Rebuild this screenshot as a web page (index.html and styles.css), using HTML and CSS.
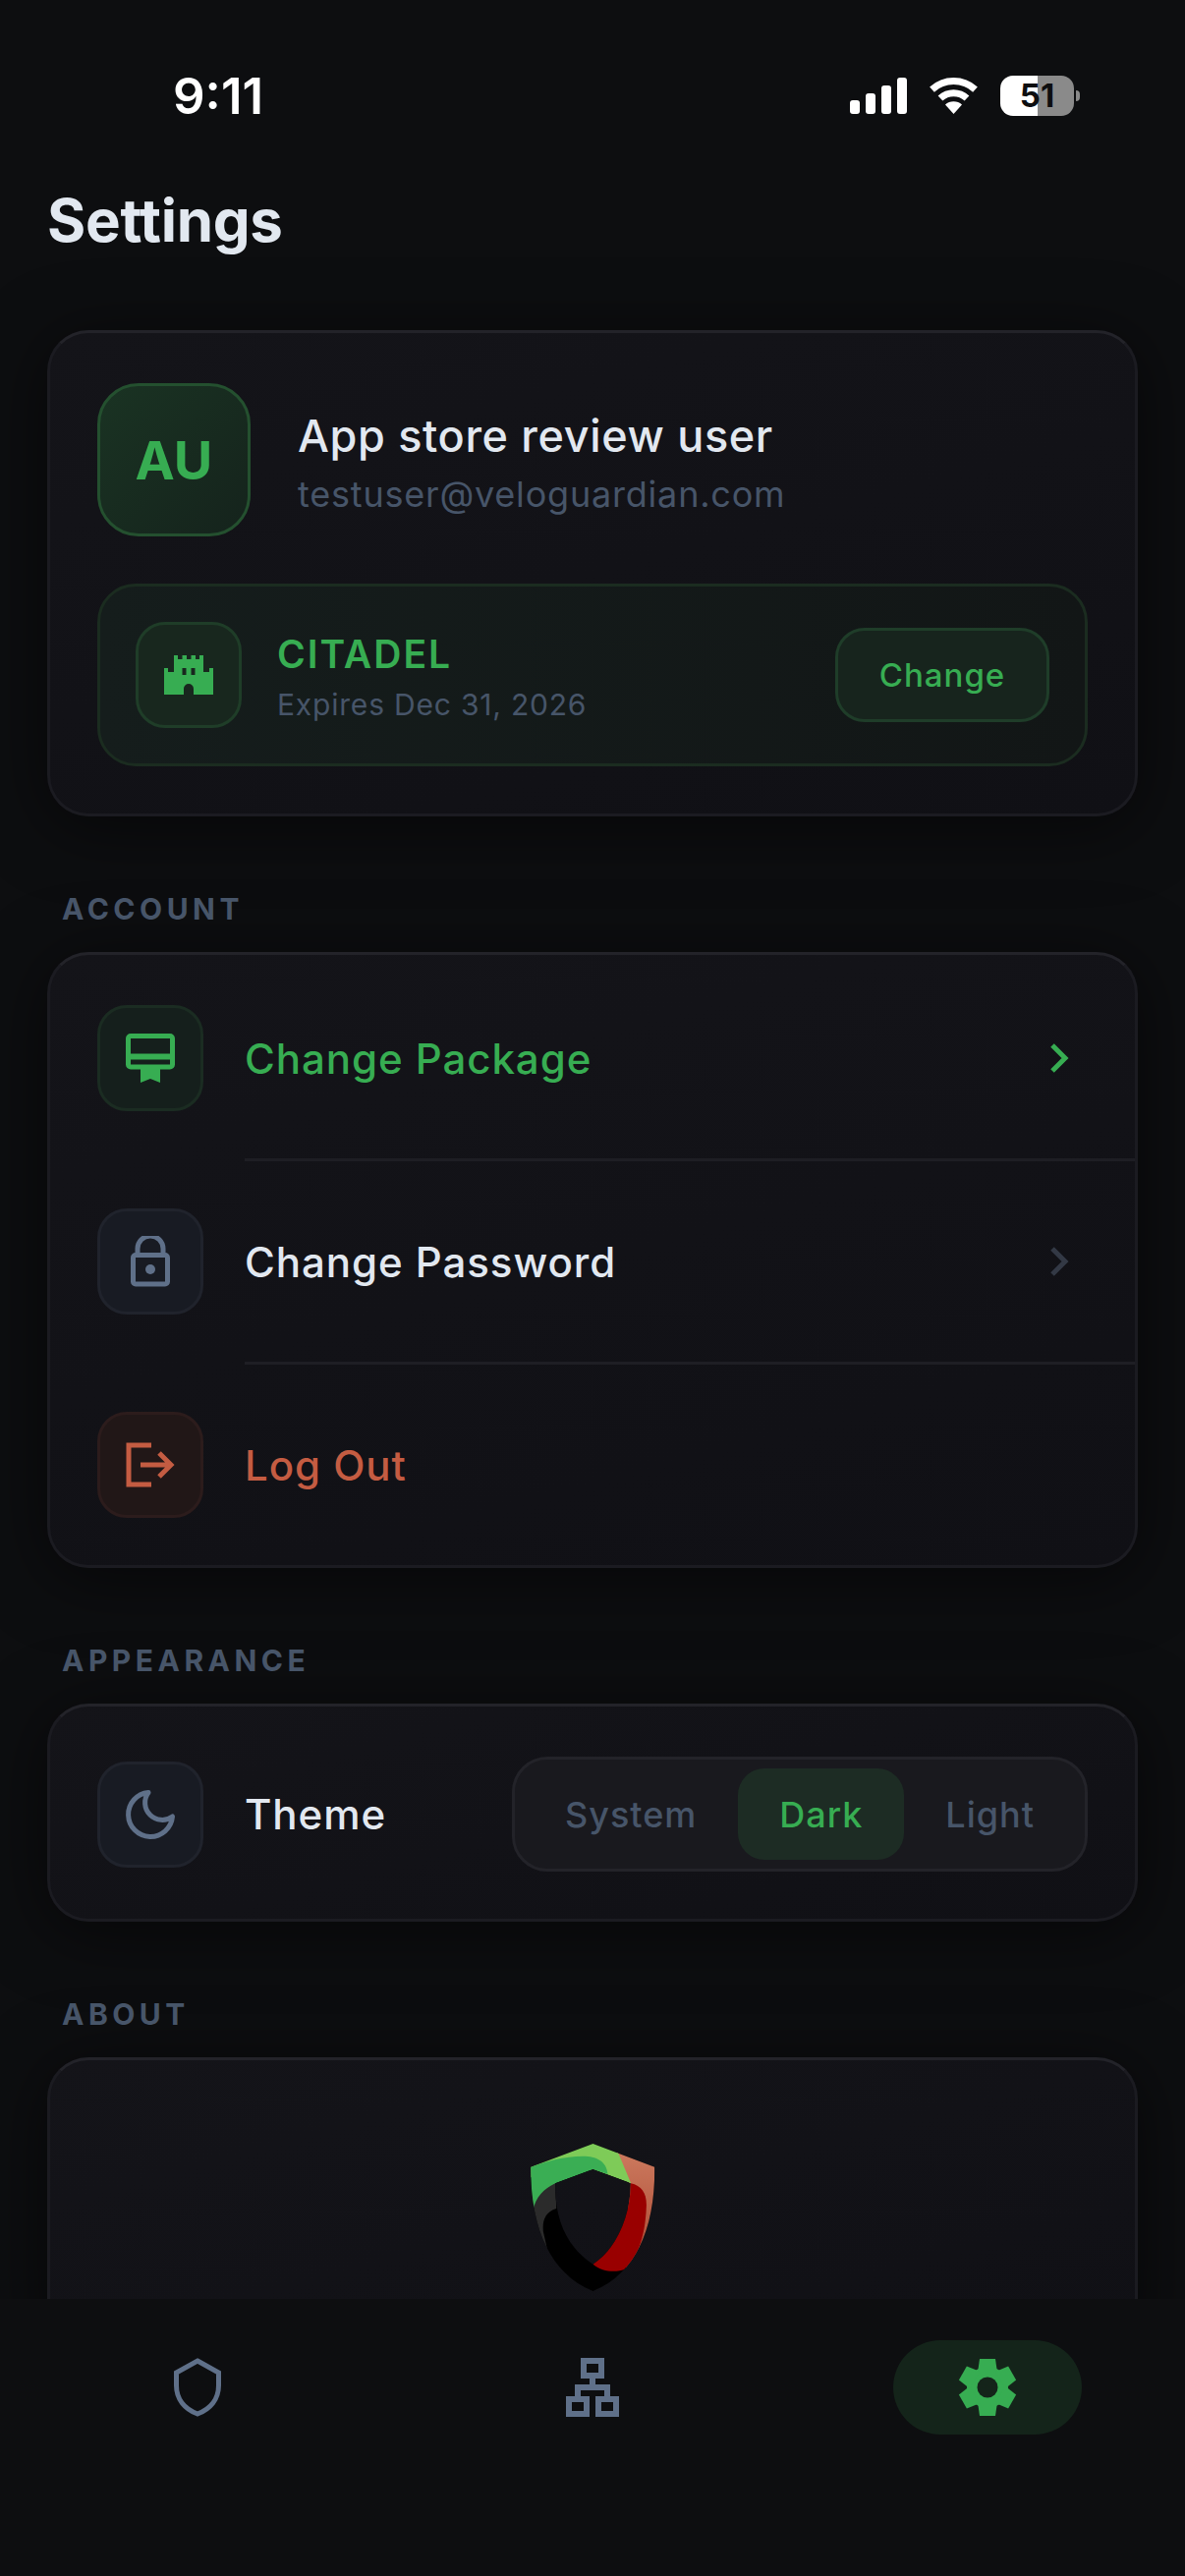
FILE: index.html
```html
<!DOCTYPE html>
<html lang="en">
<head>
<meta charset="utf-8">
<title>Settings</title>
<link rel="stylesheet" href="styles.css">
</head>
<body>
<div class="app">
  <main class="screen">
    <header class="status">
      <span class="time">9:11</span>
      <div class="status-icons">
        <div class="signal"><i class="b1"></i><i class="b2"></i><i class="b3"></i><i class="b4"></i></div>
        <svg class="wifi" viewBox="0 0 51 37"><path d="M3.5 12.1A32.5 32.5 0 0 1 47.5 12.1M12 21A20 20 0 0 1 39 21" fill="none" stroke="#fff" stroke-width="7"/><path d="M25.5 37L17 27.5A13 13 0 0 1 34 27.5Z" fill="#fff"/></svg>
        <div class="battery-wrap"><div class="battery">51</div><div class="nib"></div></div>
      </div>
    </header>
    <h1 class="title">Settings</h1>

    <section class="card profile">
      <div class="user">
        <div class="avatar">AU</div>
        <div class="user-text">
          <div class="name">App store review user</div>
          <div class="email">testuser@veloguardian.com</div>
        </div>
      </div>
      <div class="plan">
        <div class="plan-icon">
          <svg width="50" height="40" viewBox="0 0 50 40"><path fill-rule="evenodd" fill="#37ad52" d="M10 0h4v4h4.5V0H23v4h4.5V0H32v4h4V0h4v17h6v-4h4v27H30v-6a5 5 0 0 0-10 0v6H0V13h4v4h6ZM18.5 13v7h4v-7ZM27.5 13v7h4v-7Z"/></svg>
        </div>
        <div class="plan-text">
          <div class="plan-name">CITADEL</div>
          <div class="plan-exp">Expires Dec 31, 2026</div>
        </div>
        <div class="change-btn">Change</div>
      </div>
    </section>

    <div class="label">ACCOUNT</div>
    <section class="card list">
      <div class="row">
        <div class="icon-box box-green">
          <svg width="50" height="50" viewBox="0 0 50 50"><rect x="2.500" y="2.500" width="45" height="31.500" rx="2.500" fill="none" stroke="#37ad52" stroke-width="5"/><path d="M3 20.500h44v6H3Z" fill="#37ad52"/><path d="M15 36h20v14l-10-4-10 4Z" fill="#37ad52"/></svg>
        </div>
        <span class="row-text green">Change Package</span>
        <svg class="chev" width="20" height="32" viewBox="0 0 20 32"><path d="M3 3l13 13L3 29" fill="none" stroke="#37ad52" stroke-width="5"/></svg>
      </div>
      <div class="divider"></div>
      <div class="row">
        <div class="icon-box box-slate">
          <svg width="40" height="52" viewBox="0 0 40 52"><path d="M7 20v-7a13 13 0 0 1 26 0v7" fill="none" stroke="#5f7089" stroke-width="5"/><rect x="2.500" y="19.500" width="35" height="29.500" rx="2.500" fill="none" stroke="#5f7089" stroke-width="5"/><circle cx="20" cy="34" r="5" fill="#5f7089"/></svg>
        </div>
        <span class="row-text">Change Password</span>
        <svg class="chev" width="20" height="32" viewBox="0 0 20 32"><path d="M3 3l13 13L3 29" fill="none" stroke="#333945" stroke-width="5"/></svg>
      </div>
      <div class="divider"></div>
      <div class="row">
        <div class="icon-box box-red">
          <svg width="50" height="46" viewBox="0 0 50 46"><path d="M26 3H3v40h23" fill="none" stroke="#c45c42" stroke-width="5"/><path d="M15 23h31M34 11l12 12-12 12" fill="none" stroke="#c45c42" stroke-width="5"/></svg>
        </div>
        <span class="row-text red">Log Out</span>
      </div>
    </section>

    <div class="label">APPEARANCE</div>
    <section class="card theme">
      <div class="icon-box box-slate">
        <svg width="60" height="60" viewBox="0 0 24 24"><path d="M21 12.790A9 9 0 1 1 11.210 3 7 7 0 0 0 21 12.790Z" fill="none" stroke="#5f7089" stroke-width="2" stroke-linejoin="round"/></svg>
      </div>
      <span class="row-text">Theme</span>
      <div class="segment">
        <span class="seg">System</span>
        <span class="seg seg-on">Dark</span>
        <span class="seg">Light</span>
      </div>
    </section>

    <div class="label">ABOUT</div>
    <section class="card about">
      <svg width="127" height="150" viewBox="180 97 380 450">
        <defs>
          <clipPath id="ring"><path clip-rule="evenodd" d="M370 97L558 168C560 340 510 490 370 547C230 490 180 340 180 168ZM370 175L255 218C252 340 300 420 370 465C440 420 485 320 485 218Z"/></clipPath>
          <linearGradient id="salmon" x1="0" y1="0" x2="0" y2="1"><stop offset="0" stop-color="#cc7a5e"/><stop offset="1" stop-color="#a8432f"/></linearGradient>
        </defs>
        <g clip-path="url(#ring)">
          <rect x="170" y="90" width="400" height="470" fill="#000"/>
          <path d="M440 120L570 160V400L470 490L480 218Z" fill="url(#salmon)"/>
          <path d="M485 218C520 225 535 250 533 290C530 370 510 440 470 480C440 490 400 490 370 465Z" fill="#990000"/>
          <path d="M255 210L258 295C225 305 215 330 218 365L235 440L170 340V230Z" fill="#2b2b2b"/>
          <path d="M170 160L370 90L445 120L486 218L370 175L300 190L180 200Z" fill="#7ecb58"/>
          <path d="M170 168V310L187 300C195 260 220 235 255 218L370 175L415 190C412 150 380 135 340 135C280 135 230 150 180 168Z" fill="#3aae54"/>
        </g>
      </svg>
    </section>
  </main>

  <nav class="tabs">
    <div class="tab">
      <svg width="48" height="60" viewBox="0 0 48 60"><path d="M24 3L45.500 15V28C45.500 42 37 52 24 57C11 52 2.500 42 2.500 28V15Z" fill="none" stroke="#5f7089" stroke-width="5"/></svg>
    </div>
    <div class="tab">
      <svg width="54" height="60" viewBox="0 0 54 60"><g fill="none" stroke="#5f7089" stroke-width="6"><rect x="18" y="3" width="18" height="15"/><rect x="3" y="42" width="18" height="15"/><rect x="33" y="42" width="18" height="15"/><path d="M27 21v9M12 39v-9h30v9"/></g></svg>
    </div>
    <div class="tab">
      <div class="tab-on">
        <svg width="60" height="60" viewBox="-30 -30 60 60">
          <g fill="#37ad52">
            <circle r="21"/>
            <path d="M-8-29H8L10-15H-10Z"/>
            <path d="M-8-29H8L10-15H-10Z" transform="rotate(60)"/>
            <path d="M-8-29H8L10-15H-10Z" transform="rotate(120)"/>
            <path d="M-8-29H8L10-15H-10Z" transform="rotate(180)"/>
            <path d="M-8-29H8L10-15H-10Z" transform="rotate(240)"/>
            <path d="M-8-29H8L10-15H-10Z" transform="rotate(300)"/>
          </g>
          <circle r="10.500" fill="#14241a"/>
        </svg>
      </div>
    </div>
  </nav>
</div>
</body>
</html>
```
FILE: styles.css
```css
* { box-sizing: border-box; }
html, body { margin: 0; padding: 0; background: #0d0e10; }
body { font-family: Inter, "Liberation Sans", sans-serif; color: #e2e8f0; }
.app { width: 1206px; height: 2622px; display: flex; flex-direction: column; overflow: hidden; }
.screen { flex: 1; min-height: 0; overflow: hidden; padding: 0 48px; background: #0d0e10; }

.status { height: 188px; padding: 77px 107px 0 176px; margin: 0 -48px; display: flex; align-items: flex-start; }
.time { font-size: 51px; font-weight: 600; line-height: 41px; color: #fff; }
.status-icons { margin-left: auto; display: flex; gap: 22px; align-items: flex-start; }
.signal { display: flex; align-items: flex-end; gap: 6px; height: 37px; margin-top: 2px; }
.signal i { width: 10px; background: #fff; border-radius: 3px; display: block; }
.b1 { height: 14px; } .b2 { height: 21px; } .b3 { height: 29px; } .b4 { height: 37px; }
.wifi { width: 51px; height: 37px; margin-top: 2px; }
.battery-wrap { display: flex; align-items: center; gap: 2px; }
.battery { width: 75px; height: 41px; border-radius: 13px; background: linear-gradient(90deg, #fff 51%, #8a8a8a 51%); color: #0d0e10; font-size: 33px; font-weight: 700; line-height: 41px; text-align: center; }
.nib { width: 4px; height: 11px; background: #8a8a8a; border-radius: 0 4px 4px 0; }

.title { margin: 0 0 76px; font-size: 60px; font-weight: 700; line-height: 72px; color: #e2e8f0; letter-spacing: -0.3px; }

.card { border: 3px solid #1b1b21; border-top-color: #232329; border-radius: 42px; background: linear-gradient(165deg, #141419, #101015); box-shadow: 0 10px 70px rgba(0, 0, 0, .55); }
.profile { padding: 51px 48px 48px; }
.user { display: flex; align-items: center; gap: 48px; }
.avatar { width: 156px; height: 156px; border-radius: 42px; border: 3px solid #24502f; background: linear-gradient(135deg, #1a3323, #15231c); color: #37ad52; font-size: 54px; font-weight: 700; display: flex; align-items: center; justify-content: center; }
.user-text { padding-top: 5px; }
.name { font-size: 45px; font-weight: 500; line-height: 60px; color: #e2e8f0; letter-spacing: 0.65px; }
.email { margin-top: 5px; font-size: 36px; font-weight: 400; line-height: 48px; color: #475569; letter-spacing: 0.8px; }

.plan { margin-top: 48px; padding: 36px; border: 3px solid #1b2c20; border-radius: 39px; background: linear-gradient(90deg, #151d1c, #121616); display: flex; align-items: center; gap: 36px; }
.plan-icon { width: 108px; height: 108px; border-radius: 30px; border: 3px solid #1f3d28; background: #18271e; display: flex; align-items: center; justify-content: center; }
.plan-text { padding-top: 6px; }
.plan-name { font-size: 39px; font-weight: 600; line-height: 48px; color: #37ad52; letter-spacing: 2px; }
.plan-exp { margin-top: 6px; font-size: 30px; line-height: 42px; color: #475569; letter-spacing: 0.8px; }
.change-btn { margin-left: auto; width: 218px; height: 96px; border-radius: 30px; border: 3px solid #1f3d29; background: #17241d; color: #37ad52; font-size: 33px; font-weight: 500; letter-spacing: 1px; display: flex; align-items: center; justify-content: center; }

.label { margin: 76px 0 26px; padding-left: 15px; font-size: 30px; font-weight: 700; line-height: 36px; color: #475569; letter-spacing: 4.5px; }

.list { padding-top: 3px; }
.row { padding: 48px; display: flex; align-items: center; gap: 42px; }
.divider { height: 3px; margin-left: 198px; background: #1e1e24; }
.row-text { font-size: 42px; font-weight: 500; letter-spacing: 0.95px; color: #e2e8f0; }
.green { color: #37ad52; }
.red { color: #c45c42; }
.chev { margin-left: auto; margin-right: 19px; }
.icon-box { width: 108px; height: 108px; flex: none; border-radius: 30px; border: 3px solid; display: flex; align-items: center; justify-content: center; }
.box-green { background: #151f1c; border-color: #1b2c22; }
.box-slate { background: #181b23; border-color: #20232c; }
.box-red { background: #211717; border-color: #2c1c1c; }

.theme { padding: 51px 48px 48px; display: flex; align-items: center; gap: 42px; }
.segment { margin-left: auto; display: flex; padding: 9px; border: 3px solid #232329; border-radius: 36px; background: #19191e; }
.seg { height: 93px; padding: 0 42px; border-radius: 27px; font-size: 36px; font-weight: 500; letter-spacing: 1px; color: #475569; display: flex; align-items: center; }
.seg-on { background: #1d2c24; color: #37ad52; }

.about { padding: 85px 48px 60px; display: flex; justify-content: center; }

.tabs { height: 282px; flex: none; padding-top: 42px; background: #0d0e10; display: grid; grid-template-columns: repeat(3, 1fr); align-items: start; position: relative; }
.tab { height: 96px; display: flex; align-items: center; justify-content: center; }
.tab-on { width: 192px; height: 96px; border-radius: 48px; background: #14241a; display: flex; align-items: center; justify-content: center; }
```
